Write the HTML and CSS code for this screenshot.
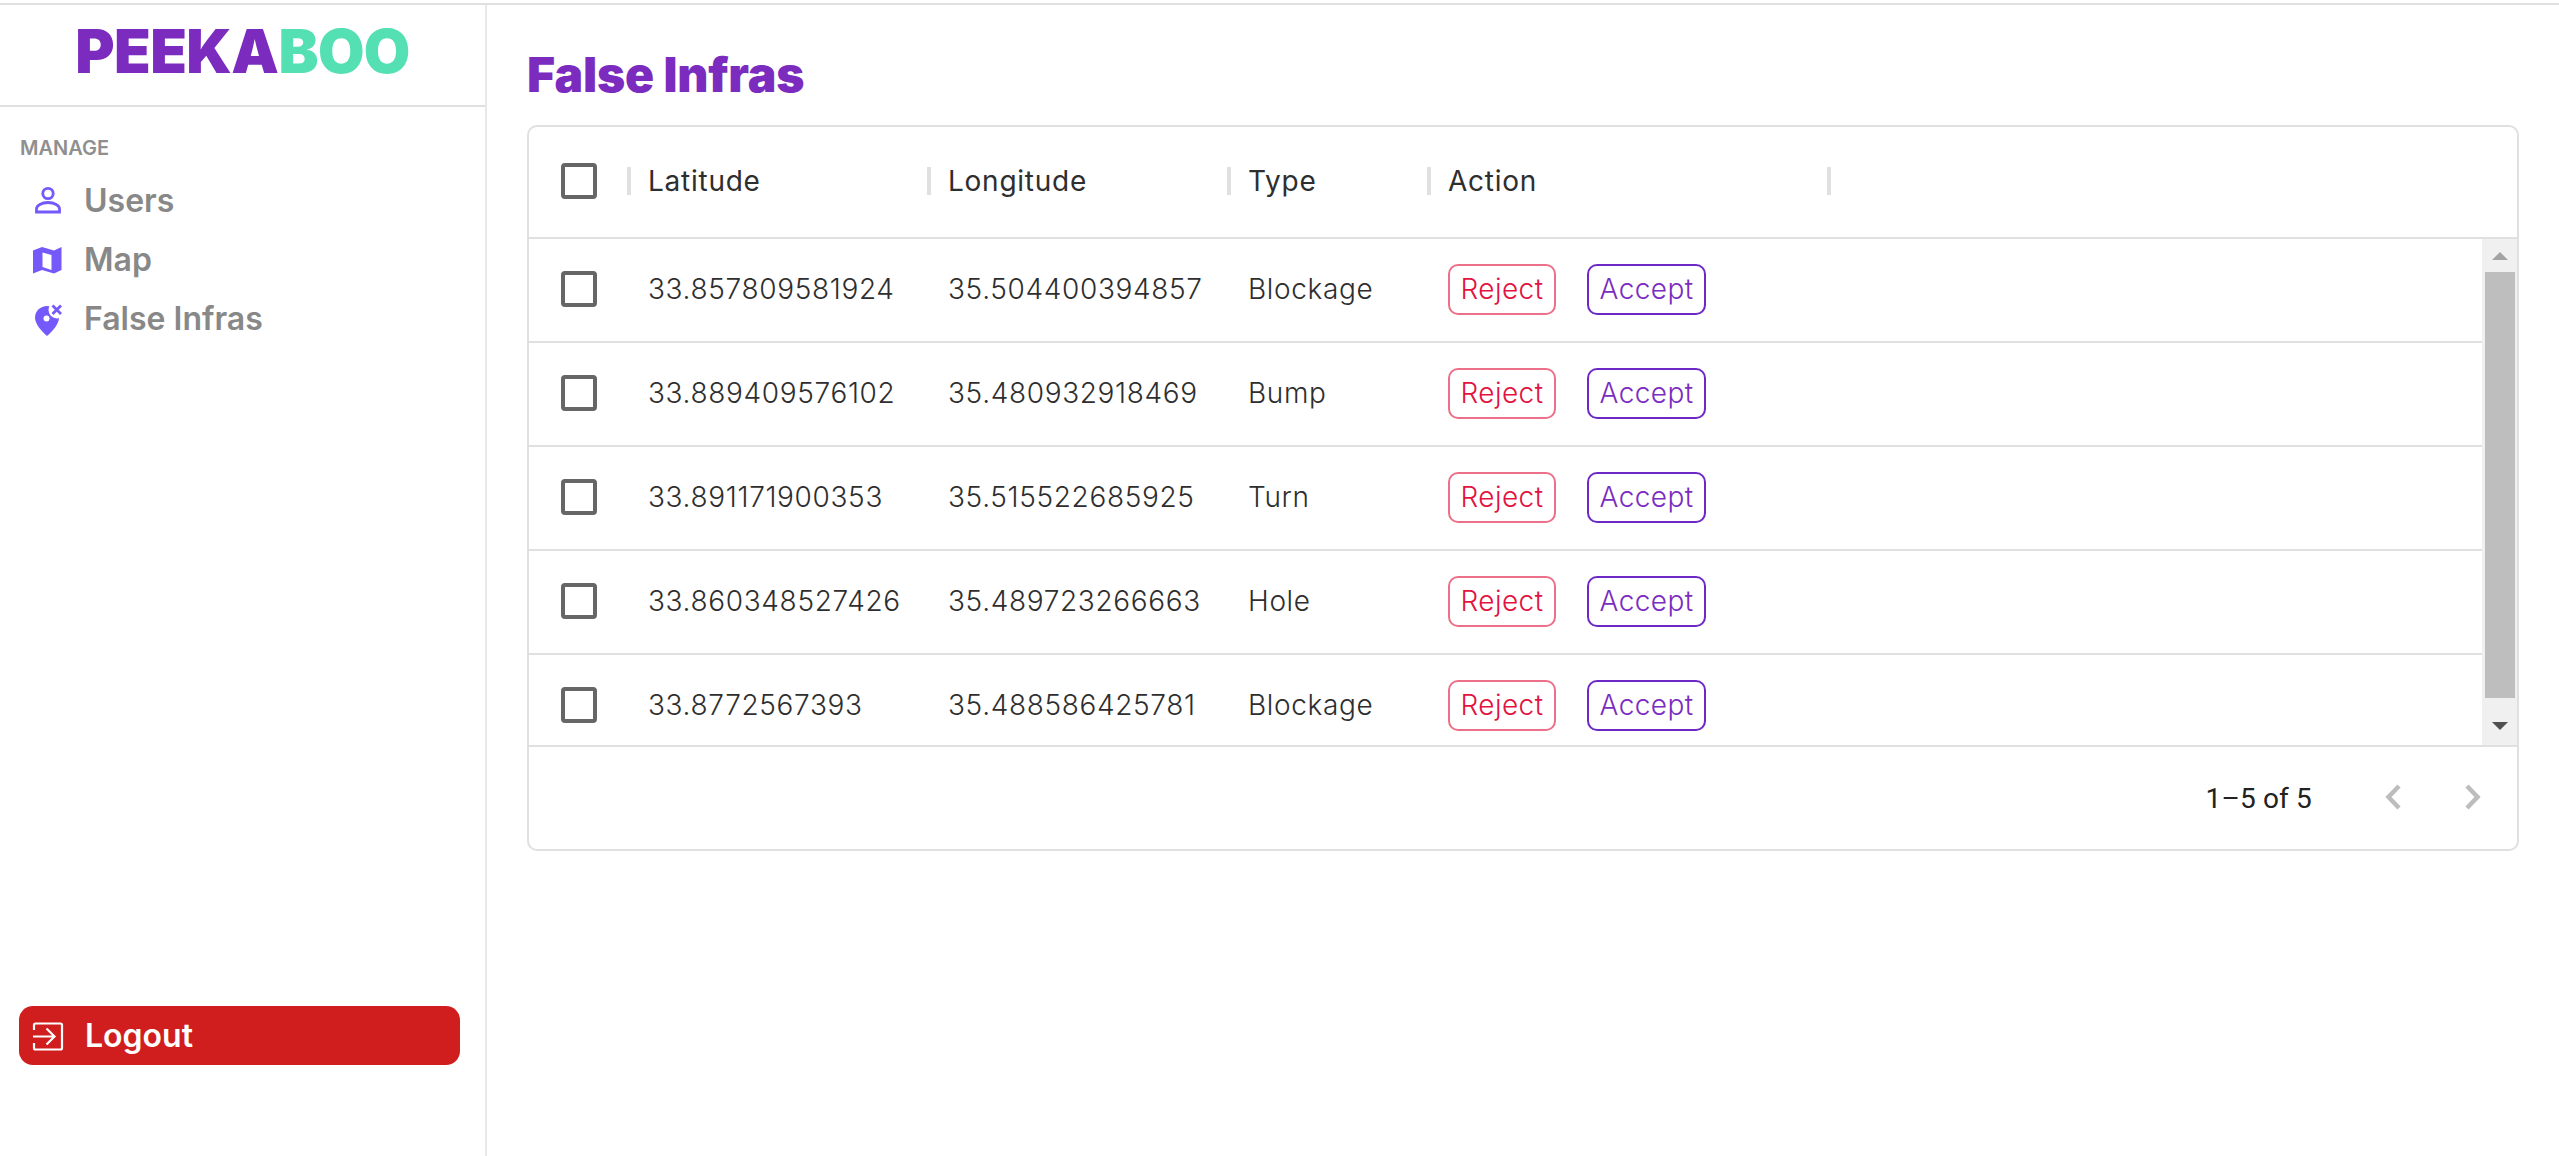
FILE: index.html
```html
<!DOCTYPE html>
<html lang="en">
<head>
  <meta charset="UTF-8" />
  <title>False Infras</title>
  <link rel="stylesheet" href="styles.css">
</head>
<body>
  <div class="app">
    <aside class="sidebar">
      <div class="logo"><span class="logo-a">PEEKA</span><span class="logo-b">BOO</span></div>
      <div class="nav">
        <div class="nav-title">MANAGE</div>
        <a class="nav-item">
          <svg class="icon" viewBox="0 0 40 40" fill="none" stroke="#7559fb" stroke-width="2.8"><circle cx="20" cy="12.5" r="5.2"/><path d="M8.500 31v-3c0-3.500 5-6.500 11.500-6.500s11.500 3 11.500 6.500v3z"/></svg>
          Users
        </a>
        <a class="nav-item">
          <svg class="icon" viewBox="0 0 40 40"><path fill="#7559fb" fill-rule="evenodd" d="M5 10.500 14 7l12 3.500L33.500 7V30l-7.500 3.500L14 30l-9 3.500zM14.500 12.500v14.500l9 3V15z"/></svg>
          Map
        </a>
        <a class="nav-item">
          <svg class="icon" viewBox="0 0 40 40"><path fill="#7559fb" d="M19 7c6.500 0 12 5 12 11.500 0 6.500-6 13-12 18.500C13 31.500 7 25 7 18.500 7 12 12.500 7 19 7z"/><circle cx="29" cy="11" r="8.500" fill="#fff"/><circle cx="18.500" cy="19.500" r="3" fill="#fff"/><path stroke="#7559fb" stroke-width="2.800" d="M24.500 6.500l8.500 8.500M33 6.500 24.500 15"/></svg>
          False Infras
        </a>
      </div>
      <a class="logout">
        <svg class="icon" viewBox="0 0 40 40" fill="none" stroke="#fff" stroke-width="2.200"><path d="M6 14V9a1.500 1.500 0 0 1 1.500-1.500h25A1.500 1.500 0 0 1 34 9v23a1.500 1.500 0 0 1-1.500 1.500h-25A1.500 1.500 0 0 1 6 32v-5"/><path d="M5 20.500h21M18.500 12.500l8 8-8 8"/></svg>
        Logout
      </a>
    </aside>

    <main class="main">
      <h1 class="title">False Infras</h1>
      <div class="card">
        <div class="row head">
          <div class="cell cell-check"><span class="checkbox"></span><span class="sep"></span></div>
          <div class="cell cell-lat">Latitude<span class="sep"></span></div>
          <div class="cell cell-lng">Longitude<span class="sep"></span></div>
          <div class="cell cell-type">Type<span class="sep"></span></div>
          <div class="cell cell-action">Action<span class="sep"></span></div>
        </div>
        <div class="body">
          <div class="rows">
            <div class="row">
              <div class="cell cell-check"><span class="checkbox"></span></div>
              <div class="cell cell-lat">33.857809581924</div>
              <div class="cell cell-lng">35.504400394857</div>
              <div class="cell cell-type">Blockage</div>
              <div class="cell cell-action"><button class="btn reject">Reject</button><button class="btn accept">Accept</button></div>
            </div>
            <div class="row">
              <div class="cell cell-check"><span class="checkbox"></span></div>
              <div class="cell cell-lat">33.889409576102</div>
              <div class="cell cell-lng">35.480932918469</div>
              <div class="cell cell-type">Bump</div>
              <div class="cell cell-action"><button class="btn reject">Reject</button><button class="btn accept">Accept</button></div>
            </div>
            <div class="row">
              <div class="cell cell-check"><span class="checkbox"></span></div>
              <div class="cell cell-lat">33.891171900353</div>
              <div class="cell cell-lng">35.515522685925</div>
              <div class="cell cell-type">Turn</div>
              <div class="cell cell-action"><button class="btn reject">Reject</button><button class="btn accept">Accept</button></div>
            </div>
            <div class="row">
              <div class="cell cell-check"><span class="checkbox"></span></div>
              <div class="cell cell-lat">33.860348527426</div>
              <div class="cell cell-lng">35.489723266663</div>
              <div class="cell cell-type">Hole</div>
              <div class="cell cell-action"><button class="btn reject">Reject</button><button class="btn accept">Accept</button></div>
            </div>
            <div class="row">
              <div class="cell cell-check"><span class="checkbox"></span></div>
              <div class="cell cell-lat">33.8772567393</div>
              <div class="cell cell-lng">35.488586425781</div>
              <div class="cell cell-type">Blockage</div>
              <div class="cell cell-action"><button class="btn reject">Reject</button><button class="btn accept">Accept</button></div>
            </div>
          </div>
          <div class="scrollbar">
            <div class="scroll-btn"><span class="arrow-up"></span></div>
            <div class="thumb"></div>
            <div class="scroll-btn scroll-btn-down"><span class="arrow-down"></span></div>
          </div>
        </div>
        <div class="footer">
          <span class="count">1–5 of 5</span>
          <svg class="chevron" viewBox="0 0 16 26" fill="none" stroke="#bdbdbd" stroke-width="4.500"><path d="M14 2 3.500 13 14 24"/></svg>
          <svg class="chevron" viewBox="0 0 16 26" fill="none" stroke="#bdbdbd" stroke-width="4.500"><path d="M2 2l10.500 11L2 24"/></svg>
        </div>
      </div>
    </main>
  </div>
</body>
</html>
```

FILE: styles.css
```css
* {
  box-sizing: border-box;
}

body {
  margin: 0;
  background: #fff;
  font-family: Inter, "Liberation Sans", sans-serif;
  color: #2e2e2e;
}

.app {
  display: flex;
  margin-top: 3px;
  height: 1153px;
  border-top: 2px solid #e0e0e0;
  overflow: hidden;
}

/* sidebar */
.sidebar {
  display: flex;
  flex-direction: column;
  width: 487px;
  flex-shrink: 0;
  border-right: 2px solid #e8e8e8;
}

.logo {
  display: flex;
  justify-content: center;
  align-items: center;
  height: 102px;
  padding-bottom: 9px;
  border-bottom: 2px solid #e0e0e0;
  font-size: 60px;
  font-weight: 900;
  line-height: 1;
  letter-spacing: -0.6px;
}

.logo-a {
  color: #7b2cbf;
}

.logo-b {
  color: #55e0b4;
}

.nav {
  padding: 27px 0 0 20px;
}

.nav-title {
  margin-bottom: 9px;
  font-size: 20px;
  font-weight: 600;
  line-height: 28px;
  color: #8f8f8f;
}

.nav-item {
  display: flex;
  align-items: center;
  gap: 16px;
  height: 59px;
  padding-left: 8px;
  font-size: 32px;
  font-weight: 600;
  color: #888;
}

.icon {
  width: 40px;
  height: 40px;
  flex-shrink: 0;
}

.logout {
  display: flex;
  align-items: center;
  gap: 17px;
  width: 441px;
  height: 59px;
  margin: auto 0 91px 19px;
  padding-left: 9px;
  background: #d01e1e;
  border-radius: 14px;
  font-size: 32px;
  font-weight: 600;
  color: #fff;
}

/* main */
.main {
  flex: 1;
  min-width: 0;
  padding: 0 40px 0 40px;
}

.title {
  height: 120px;
  margin: 0;
  padding-top: 41px;
  font-size: 48px;
  font-weight: 900;
  line-height: 58px;
  letter-spacing: -0.15px;
  color: #7b2cbf;
}

.card {
  border: 2px solid #e0e0e0;
  border-radius: 10px;
  overflow: hidden;
}

.row {
  display: flex;
  height: 104px;
  padding-bottom: 2px;
  border-bottom: 2px solid #e0e0e0;
  font-size: 28px;
  font-weight: 350;
  letter-spacing: 0.65px;
}

.row.head {
  height: 112px;
  font-weight: 400;
  letter-spacing: 0.75px;
}

.cell {
  display: flex;
  align-items: center;
  flex-shrink: 0;
  padding-left: 17px;
  white-space: nowrap;
}

.cell-check {
  width: 102px;
  padding-left: 32px;
}

.cell-lat,
.cell-lng {
  width: 300px;
}

.cell-type {
  width: 200px;
}

.cell-action {
  width: 400px;
  gap: 31px;
}

.sep {
  width: 4px;
  height: 28px;
  margin-left: auto;
  background: #e0e0e0;
}

.checkbox {
  display: block;
  width: 36px;
  height: 36px;
  border: 4.500px solid #666;
  border-radius: 4px;
}

.btn {
  height: 51px;
  padding: 0;
  background: #fff;
  border: 2px solid;
  border-radius: 10px;
  font-family: inherit;
  font-size: 28px;
  font-weight: 350;
  letter-spacing: 0.4px;
  line-height: 1;
  cursor: pointer;
}

.reject {
  width: 108px;
  color: #e31240;
  border-color: #ec7089;
}

.accept {
  width: 119px;
  color: #7b2cbf;
  border-color: #6d28c5;
}

.body {
  display: flex;
  height: 506px;
}

.rows {
  flex: 1;
  min-width: 0;
  overflow: hidden;
}

.scrollbar {
  display: flex;
  flex-direction: column;
  align-items: center;
  width: 35px;
  background: #f0f0f0;
}

.scroll-btn {
  display: flex;
  align-items: center;
  justify-content: center;
  height: 33px;
}

.scroll-btn-down {
  height: 38px;
  margin-top: auto;
}

.arrow-up,
.arrow-down {
  width: 0;
  height: 0;
  border-left: 8px solid transparent;
  border-right: 8px solid transparent;
}

.arrow-up {
  border-bottom: 8px solid #a3a3a3;
}

.arrow-down {
  border-top: 8px solid #505050;
}

.thumb {
  width: 30px;
  height: 426px;
  background: #bebebe;
}

.footer {
  display: flex;
  align-items: center;
  justify-content: flex-end;
  height: 104px;
  padding-right: 36px;
  border-top: 2px solid #e0e0e0;
}

.count {
  margin-right: 73px;
  font-family: Roboto, sans-serif;
  font-size: 28px;
  letter-spacing: 0.15px;
  color: #222;
}

.chevron {
  width: 16px;
  height: 26px;
  margin-top: -2px;
}

.chevron + .chevron {
  margin-left: 64px;
}
```
